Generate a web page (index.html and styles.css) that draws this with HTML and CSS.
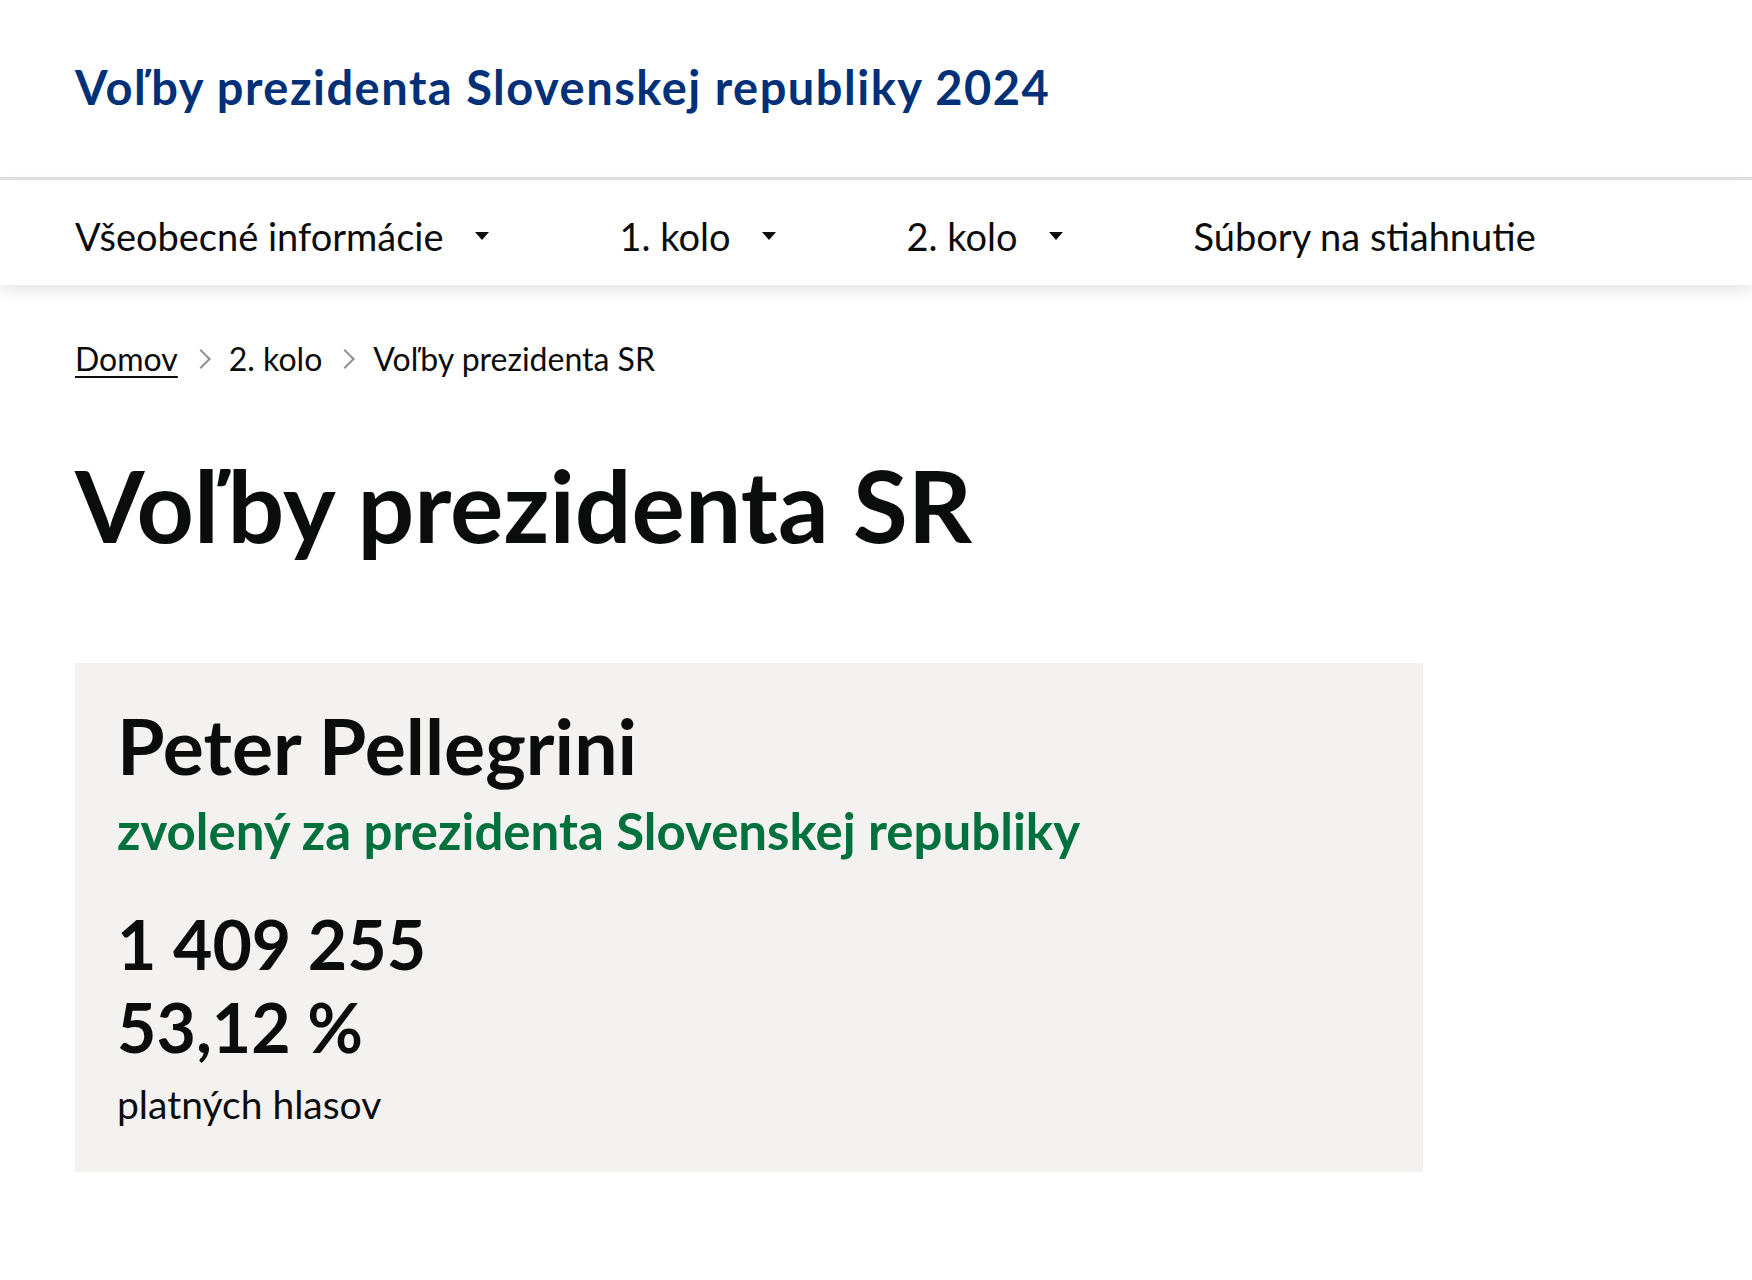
FILE: index.html
```html
<!DOCTYPE html>
<html lang="sk">
<head>
<meta charset="utf-8">
<title>Voľby prezidenta SR</title>
<link rel="stylesheet" href="styles.css">
</head>
<body>
<header class="site-header">
  <a class="brand" href="#">Voľby prezidenta Slovenskej republiky 2024</a>
</header>
<nav class="main-nav">
  <a class="nav-item" href="#">Všeobecné informácie <span class="caret"></span></a>
  <a class="nav-item" href="#">1. kolo <span class="caret"></span></a>
  <a class="nav-item" href="#">2. kolo <span class="caret"></span></a>
  <a class="nav-item" href="#">Súbory na stiahnutie</a>
</nav>
<main class="page">
  <ol class="breadcrumbs">
    <li class="crumb"><a class="crumb-link" href="#">Domov</a></li>
    <li class="crumb crumb-sep">2. kolo</li>
    <li class="crumb crumb-sep">Voľby prezidenta SR</li>
  </ol>
  <h1 class="page-title">Voľby prezidenta SR</h1>
  <section class="result-card">
    <h2 class="winner">Peter Pellegrini</h2>
    <p class="winner-note">zvolený za prezidenta Slovenskej republiky</p>
    <div class="stats">
      <p class="big-number">1 409 255</p>
      <p class="big-number">53,12 %</p>
      <p class="caption">platných hlasov</p>
    </div>
  </section>
</main>
</body>
</html>
```
FILE: styles.css
```css
* { box-sizing: border-box; }
body {
  margin: 0;
  font-family: "Lato", "Liberation Sans", sans-serif;
  color: #0b0c0c;
  background: #fff;
}
.site-header {
  height: 180px;
  display: flex;
  align-items: center;
  padding: 0 75px 3px;
  border-bottom: 3px solid #e2e2e2;
}
.brand {
  font-size: 47px;
  font-weight: 700;
  letter-spacing: 1.5px;
  color: #003078;
  text-decoration: none;
}
.main-nav {
  height: 105px;
  display: flex;
  align-items: center;
  gap: 131px;
  padding: 6px 75px 0;
  background: #fff;
  box-shadow: 0 6px 14px rgba(0, 0, 0, 0.10);
  position: relative;
}
.nav-item {
  display: flex;
  align-items: center;
  font-size: 38px;
  color: #0b0c0c;
  text-decoration: none;
}
.caret {
  display: inline-block;
  margin-left: 31px;
  width: 0;
  height: 0;
  border-left: 7px solid transparent;
  border-right: 7px solid transparent;
  border-top: 8px solid #0b0c0c;
}
.page {
  padding: 0 75px;
}
.breadcrumbs {
  list-style: none;
  margin: 0;
  padding: 52px 0 0;
  display: flex;
  align-items: center;
  font-size: 32px;
  line-height: 44px;
}
.crumb-link {
  color: #0b0c0c;
  text-decoration: underline;
  text-decoration-thickness: 2px;
  text-underline-offset: 5px;
}
.crumb-sep {
  display: flex;
  align-items: center;
}
.crumb-sep::before {
  content: "";
  width: 12px;
  height: 12px;
  border-top: 2px solid #8f9193;
  border-right: 2px solid #8f9193;
  transform: rotate(45deg);
  margin: 0 21px 0 16px;
}
.page-title {
  margin: 68px 0 0;
  font-size: 100px;
  font-weight: 700;
  line-height: 110px;
}
.result-card {
  margin-top: 104px;
  width: 1348px;
  background: #f3f2f1;
  padding: 42px 42px 40px;
}
.winner {
  margin: 0;
  font-size: 77px;
  line-height: 80px;
  font-weight: 700;
}
.winner-note {
  margin: 11px 0 0;
  font-size: 51px;
  line-height: 70px;
  font-weight: 700;
  color: #00703c;
}
.stats {
  margin-top: 36px;
}
.big-number {
  margin: 0;
  font-size: 68px;
  line-height: 83px;
  font-weight: 700;
}
.caption {
  margin: 8px 0 0;
  font-size: 39px;
  line-height: 56px;
}
```
